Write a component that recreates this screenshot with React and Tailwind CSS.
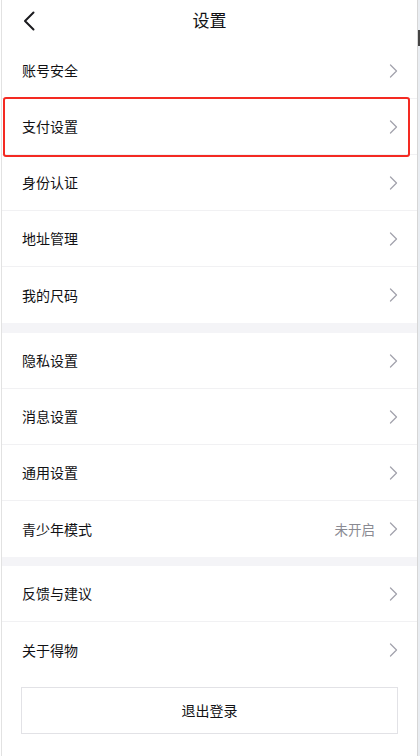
import React from "react";

const Chevron = () => (
  <svg width="9" height="14" viewBox="0 0 9 14" fill="none" className="shrink-0">
    <path d="M1.5 1 L7.5 7 L1.5 13" stroke="#a3a3ad" strokeWidth="1.3" strokeLinecap="round" strokeLinejoin="round" />
  </svg>
);

const Row = ({ label, value, last }) => (
  <div className={"h-[56px] flex items-center pl-[20px] pr-[19px] " + (last ? "" : "border-b border-[#f1f1f3]")}>
    <span className="flex-1 text-[14px] text-[#111114]">{label}</span>
    {value && <span className="text-[13.5px] text-[#8a8a92] mr-[14px]">{value}</span>}
    <Chevron />
  </div>
);

export default function App() {
  return (
    <div
      className="w-[420px] h-[756px] flex bg-white overflow-hidden"
      style={{ fontFamily: '"Noto Sans CJK SC", "Noto Sans", sans-serif' }}
    >
      <div className="w-[1px] bg-white" />
      <div className="w-[1px] bg-[#e2e2e2]" />
      <div className="relative flex-1 flex flex-col bg-white">
        <div className="h-[43px] flex items-center justify-center relative">
          <svg className="absolute left-[20px] top-[11px]" width="14" height="20" viewBox="0 0 14 20" fill="none">
            <path d="M11.5 1.5 L3 10 L11.5 18.5" stroke="#1b1b1f" strokeWidth="2" strokeLinecap="round" strokeLinejoin="round" />
          </svg>
          <span className="text-[17px] text-[#111114] -mt-[3px]">设置</span>
        </div>
        <Row label="账号安全" />
        <Row label="支付设置" />
        <Row label="身份认证" />
        <Row label="地址管理" />
        <Row label="我的尺码" last />
        <div className="h-[10px] bg-[#f4f4f7]" />
        <Row label="隐私设置" />
        <Row label="消息设置" />
        <Row label="通用设置" />
        <Row label="青少年模式" value="未开启" last />
        <div className="h-[9px] bg-[#f4f4f7]" />
        <Row label="反馈与建议" />
        <Row label="关于得物" last />
        <div className="px-[19px] pt-[9px]">
          <div className="h-[47px] border border-[#e2e2e6] flex items-center justify-center text-[14px] text-[#111114]">
            退出登录
          </div>
        </div>
        <div className="absolute left-[1px] top-[97px] w-[407px] h-[60px] border-[2.5px] border-[#f42a22] rounded-[3px]" />
      </div>
      <div className="w-[1px] bg-[#d6d6d6]" />
      <div className="w-[2px] bg-[#e9edf2] flex flex-col">
        <div className="h-[30px]" />
        <div className="h-[16px] bg-[#444]" />
      </div>
    </div>
  );
}
